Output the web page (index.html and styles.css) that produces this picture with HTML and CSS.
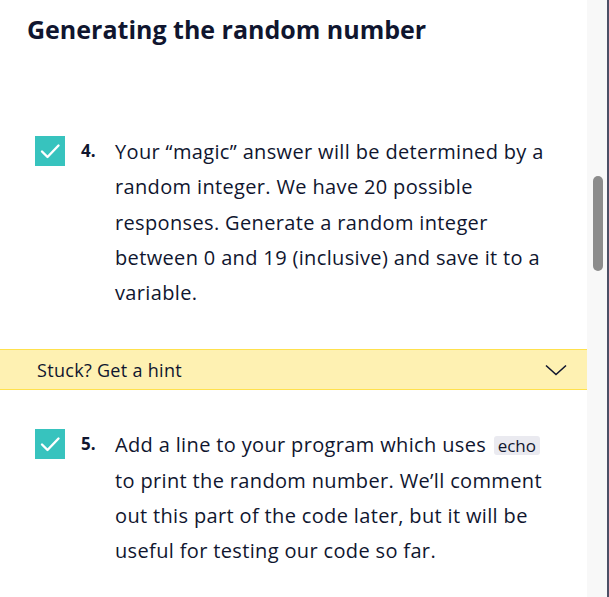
FILE: index.html
```html
<!DOCTYPE html>
<html>
<head>
<meta charset="utf-8">
<link rel="stylesheet" href="styles.css">
</head>
<body>
<div class="frame">
  <main class="content">
    <h1 class="title">Generating the random number</h1>
    <div class="task task-4">
      <span class="check"><svg width="30" height="30" viewBox="0 0 30 30"><path d="M7 15.5 L12.5 21 L23.5 9.5" fill="none" stroke="#fff" stroke-width="2.4" stroke-linecap="round" stroke-linejoin="round"/></svg></span>
      <span class="num">4.</span>
      <p class="text">Your “magic” answer will be determined by a random integer. We have 20 possible responses. Generate a random integer between 0 and 19 (inclusive) and save it to a variable.</p>
    </div>
    <div class="hint">
      <span class="hint-label">Stuck? Get a hint</span>
      <svg class="chev" width="22" height="12" viewBox="0 0 22 12"><path d="M1 1.5 L11 10.5 L21 1.5" fill="none" stroke="#10162f" stroke-width="1.6"/></svg>
    </div>
    <div class="task task-5">
      <span class="check"><svg width="30" height="30" viewBox="0 0 30 30"><path d="M7 15.5 L12.5 21 L23.5 9.5" fill="none" stroke="#fff" stroke-width="2.4" stroke-linecap="round" stroke-linejoin="round"/></svg></span>
      <span class="num">5.</span>
      <p class="text">Add a line to your program which uses <code class="code">echo</code> to print the random number. We’ll comment out this part of the code later, but it will be useful for testing our code so far.</p>
    </div>
  </main>
  <div class="scrollbar"><div class="thumb"></div></div>
  <div class="edge"></div>
</div>
</body>
</html>
```
FILE: styles.css
```css
html, body {
  margin: 0;
  padding: 0;
  background: #fff;
}
.frame {
  display: flex;
  width: 609px;
  height: 597px;
  overflow: hidden;
}
.content {
  flex: 1;
  min-width: 0;
  font-family: "Open Sans", "Lato", sans-serif;
  color: #10162f;
}
.title {
  margin: 0;
  padding: 12px 0 0 27px;
  font-size: 25px;
  line-height: 34px;
  font-weight: 700;
}
.task {
  display: grid;
  grid-template-columns: 30px 50px 1fr;
  padding: 0 32px 0 35px;
}
.task-4 {
  margin-top: 92px;
}
.task-5 {
  margin-top: 41px;
}
.check {
  width: 30px;
  height: 30px;
  background: #37c3be;
  display: block;
  margin-top: -2px;
}
.check svg {
  display: block;
}
.num {
  font-weight: 700;
  font-size: 17px;
  line-height: 35px;
  margin-left: 16px;
  margin-top: -5px;
}
.text {
  margin: -4px 0 0 0;
  font-size: 20px;
  letter-spacing: 0.35px;
  line-height: 35.3px;
}
.code {
  display: inline-block;
  font-family: "Open Sans", sans-serif;
  font-size: 17px;
  line-height: 19px;
  letter-spacing: 0;
  background: #eaeaf0;
  padding: 0 4px;
  margin: 0 1px 0 2px;
  border-radius: 3px;
}
.hint {
  margin-top: 39px;
  height: 39px;
  background: #fef1b2;
  border-top: 1.5px solid #ffe14d;
  border-bottom: 1.5px solid #ffe14d;
  display: flex;
  align-items: center;
  justify-content: space-between;
  padding: 0 20px 0 37px;
}
.hint-label {
  font-size: 18px;
  letter-spacing: 0.3px;
}
.chev {
  display: block;
}
.scrollbar {
  width: 20px;
  background: #f8f8f8;
  flex: none;
}
.thumb {
  width: 10px;
  height: 95px;
  margin: 176px 0 0 6px;
  background: #8c8c8c;
  border-radius: 5px;
}
.edge {
  width: 2px;
  flex: none;
  background: #4c5066;
}
```
